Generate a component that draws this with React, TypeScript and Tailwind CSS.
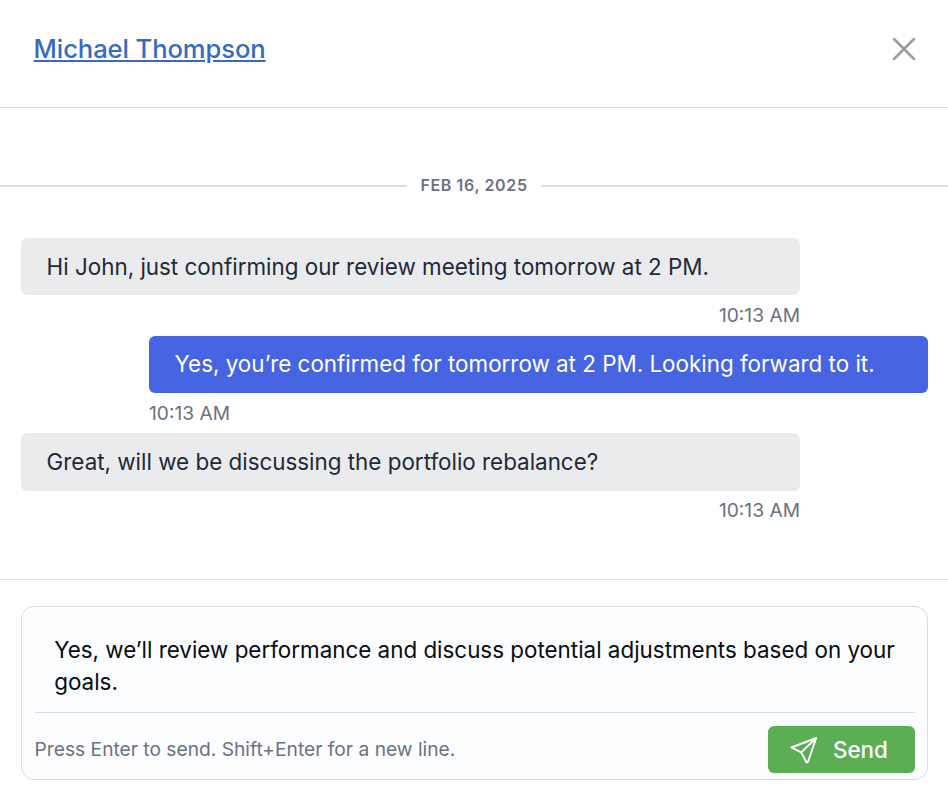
type Message = {
  id: number;
  text: string;
  time: string;
  sent: boolean;
};

const messages: Message[] = [
  { id: 1, text: "Hi John, just confirming our review meeting tomorrow at 2 PM.", time: "10:13 AM", sent: false },
  { id: 2, text: "Yes, you’re confirmed for tomorrow at 2 PM. Looking forward to it.", time: "10:13 AM", sent: true },
  { id: 3, text: "Great, will we be discussing the portfolio rebalance?", time: "10:13 AM", sent: false },
];

function MessageRow({ message }: { message: Message }) {
  return (
    <li className={message.sent ? "w-[779px] self-end" : "group w-[779px]"}>
      <p
        className={
          message.sent
            ? "h-[57.4px] rounded-[6px] bg-[#4765e2] px-[25.6px] text-[22.4px] leading-[56px] whitespace-nowrap text-white"
            : "h-[57.4px] rounded-[6px] bg-[#eaebed] px-[25.6px] text-[22.4px] leading-[58px] whitespace-nowrap text-[#1f2937]"
        }
      >
        {message.text}
      </p>
      <time
        className={
          message.sent
            ? "block h-[40.2px] text-[19.2px] leading-[40px] text-[#6b7280]"
            : "block h-[40.2px] text-right text-[19.2px] leading-[40px] text-[#6b7280] group-last:leading-[39px]"
        }
      >
        {message.time}
      </time>
    </li>
  );
}

export default function App() {
  return (
    <div className="flex h-[802px] w-[948px] flex-col overflow-hidden bg-white font-['Inter',sans-serif]">
      <header className="flex h-[108px] items-start justify-between border-b border-[#dcdddf] pr-8 pl-[33.6px]">
        <a href="#" className="mt-[29px] text-[25.6px] leading-10 font-medium tracking-[-0.1px] text-[#356cc0] underline">
          Michael Thompson
        </a>
        <button type="button" aria-label="Close" className="mt-[37px]">
          <svg width="24" height="24" viewBox="0 0 24 24" fill="none" stroke="#9b9ca0" strokeWidth="2.5" strokeLinecap="round">
            <path d="M2 2L22 22M22 2L2 22" />
          </svg>
        </button>
      </header>

      <main className="h-[472px] border-b border-[#dcdee2] pt-[65px]">
        <div className="flex h-[26px] items-center gap-[13px]">
          <span className="h-0.5 flex-1 bg-[#d9dce3]" />
          <span className="-mt-0.5 text-[16px] leading-6 font-semibold tracking-[0.64px] text-[#6b7280]">FEB 16, 2025</span>
          <span className="h-0.5 flex-1 bg-[#d9dce3]" />
        </div>
        <ul className="mt-[39px] flex flex-col pr-5 pl-[21px]">
          {messages.map((message) => (
            <MessageRow key={message.id} message={message} />
          ))}
        </ul>
      </main>

      <footer className="pt-[26px] pr-5 pl-[21px]">
        <form className="h-[174px] rounded-[13px] border border-[#d9dce3] bg-[#fcfdff] pr-3 pl-[13px]">
          <textarea
            rows={2}
            aria-label="Message"
            defaultValue="Yes, we’ll review performance and discuss potential adjustments based on your goals."
            className="block h-[105px] w-full resize-none overflow-hidden pt-[27px] pl-[19.2px] text-[22.4px] leading-8 text-[#090c12] outline-none"
          />
          <div className="flex h-[67px] items-start justify-between border-t border-[#d9dce3]">
            <p className="mt-[22px] -ml-[0.4px] text-[19.2px] leading-7 text-[#6b7280]">
              Press Enter to send. Shift+Enter for a new line.
            </p>
            <button
              type="button"
              className="mt-[13px] flex h-[47px] w-[147px] shrink-0 items-center rounded-[6px] bg-[#5cae55] pl-[22px] text-[22.4px] font-medium text-white shadow-xs"
            >
              <svg
                width="28"
                height="28"
                viewBox="0 0 28 28"
                fill="none"
                stroke="currentColor"
                strokeWidth="1.9"
                strokeLinejoin="round"
                strokeLinecap="round"
              >
                <path d="M26.2 2L1.4 11.5L11.2 16.4L16.6 26.6L17.8 26.2L26.2 2Z" />
                <path d="M26.2 2L11.2 16.4" />
              </svg>
              <span className="mt-px ml-[15px]">Send</span>
            </button>
          </div>
        </form>
      </footer>
    </div>
  );
}
